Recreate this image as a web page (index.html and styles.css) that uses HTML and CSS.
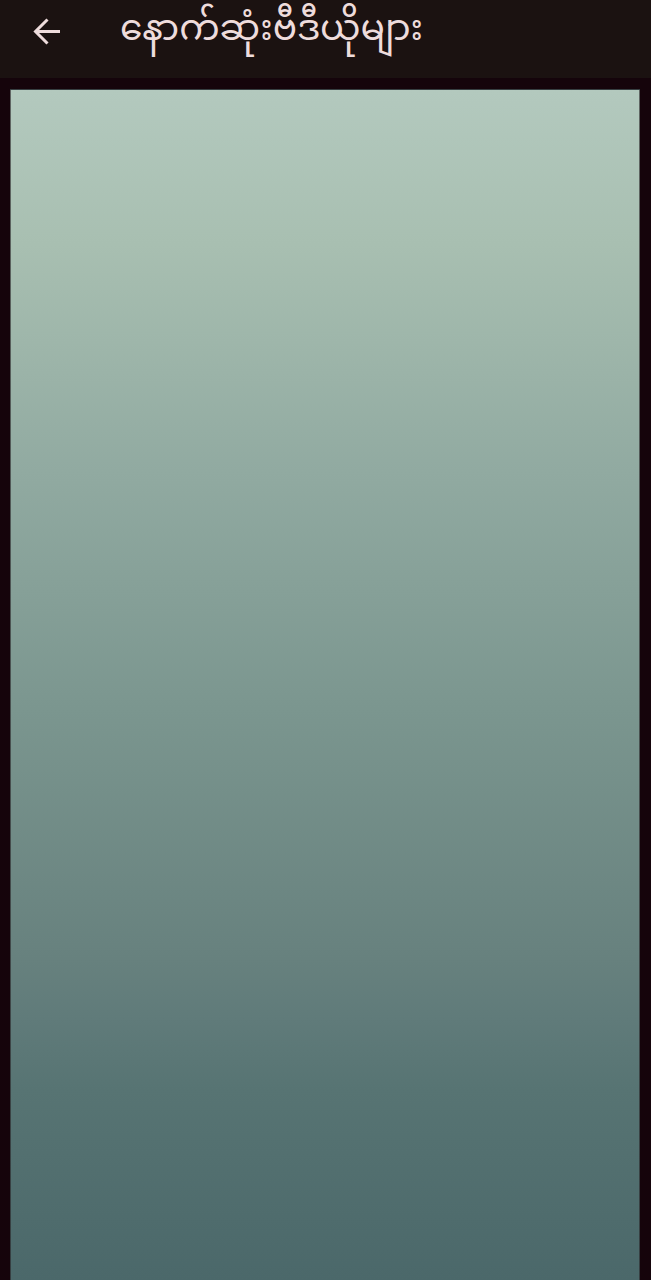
FILE: index.html
```html
<!DOCTYPE html>
<html lang="my">
<head>
    <meta charset="UTF-8">
    <meta name="viewport" content="width=device-width, initial-scale=1.0">
    <title>နောက်ဆုံးဗီဒီယိုများ</title>
    <link rel="stylesheet" href="styles.css">
</head>
<body>
    <!-- Top bar -->
    <header class="app-bar">
        <button class="back-btn" type="button" aria-label="နောက်သို့">
            <svg viewBox="0 0 28 28" width="28" height="28" aria-hidden="true">
                <path d="M28 14.5H4M15.5 2.5L3.5 14.5l12 12" />
            </svg>
        </button>
        <h1 class="title">နောက်ဆုံးဗီဒီယိုများ</h1>
    </header>

    <!-- Video list -->
    <main class="content">
        <div class="video-panel"></div>
    </main>
</body>
</html>
```

FILE: styles.css
```css
* {
    margin: 0;
    padding: 0;
    box-sizing: border-box;
}

body {
    display: flex;
    flex-direction: column;
    min-height: 100vh;
    background: #15040b;
    color: #eedcdc;
    font-family: "Noto Sans", "Noto Sans Myanmar", sans-serif;
}

/* Top bar */
.app-bar {
    display: flex;
    align-items: center;
    gap: 44px;
    height: 78px;
    padding: 0 16px 16px;
    background: #1b1211;
}

.back-btn {
    display: flex;
    padding: 16px;
    background: none;
    border: none;
    color: inherit;
    cursor: pointer;
}

.back-btn path {
    fill: none;
    stroke: currentColor;
    stroke-width: 3;
}

.title {
    align-self: flex-start;
    font-size: 36px;
    font-weight: 400;
    line-height: 54px;
    white-space: nowrap;
}

/* Video list */
.content {
    display: flex;
    flex: 1;
    padding: 11px 11px 0 10px;
}

.video-panel {
    flex: 1;
    border: 1px solid rgba(40, 35, 38, 0.6);
    border-bottom: none;
    background: linear-gradient(to bottom, #b3c9be 0%, #a8bfb1 13%, #91aaa1 32%, #7b968f 52%, #67817e 73%, #607b7a 78%, #577473 84%, #4b686a 100%);
}
```
